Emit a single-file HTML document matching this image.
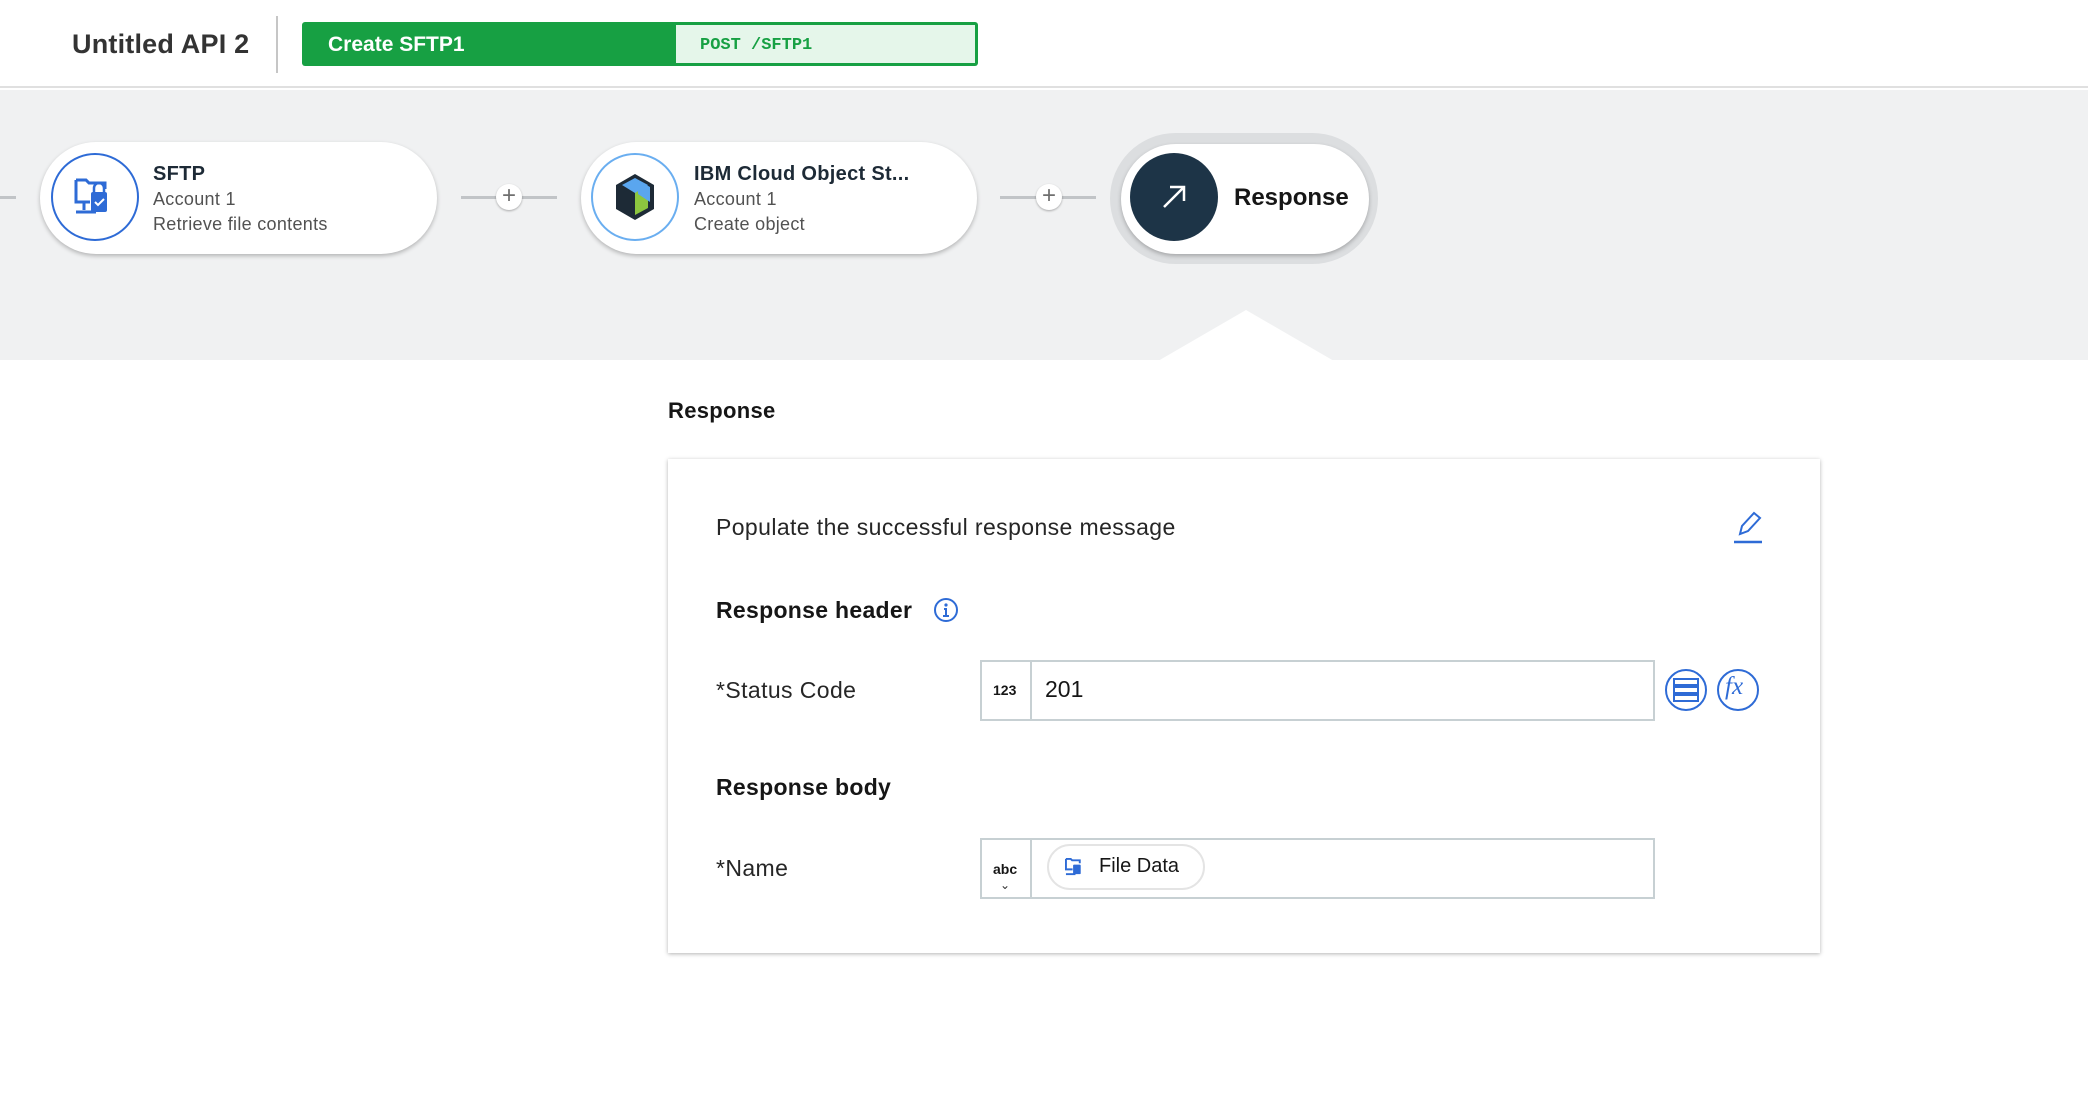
<!DOCTYPE html>
<html><head><meta charset="utf-8"><style>
*{box-sizing:border-box;margin:0;padding:0}
body{width:2088px;height:1100px;background:#fff;font-family:"Liberation Sans",sans-serif;color:#161616;position:relative;overflow:hidden}
.a{position:absolute}
.card{position:absolute;background:#fff;border-radius:56px;box-shadow:0 2px 4px rgba(0,0,0,.25)}
.circ{position:absolute;border-radius:50%}
.t1{font-weight:bold;font-size:20px;color:#1d2a36;letter-spacing:.3px}
.t2{font-size:18px;color:#525252;letter-spacing:.3px}
.line{position:absolute;height:3px;background:#c1c4c7}
.plus{position:absolute;width:26px;height:26px;border-radius:50%;background:#fff;box-shadow:0 1px 2px rgba(0,0,0,.3);font-size:24px;line-height:24px;text-align:center;color:#6f6f6f}
.lbl{position:absolute;font-size:23px;color:#262626;letter-spacing:.4px}
.h{position:absolute;font-size:23px;font-weight:bold;color:#161616;letter-spacing:.3px}
.inp{position:absolute;border:2px solid #c7d0d3;background:#fff}
</style></head><body>
<div class="a" style="left:0;top:0;width:2088px;height:88px;border-bottom:2px solid #e0e0e0"></div>
<div class="a" style="left:72px;top:29px;font-size:27px;color:#333;font-weight:bold;letter-spacing:.2px">Untitled API 2</div>
<div class="a" style="left:276px;top:16px;width:2px;height:57px;background:#c6c6c6"></div>
<div class="a" style="left:302px;top:22px;width:676px;height:44px;background:#17a043;border-radius:3px"></div>
<div class="a" style="left:676px;top:25px;width:299px;height:38px;background:#e5f6ea"></div>
<div class="a" style="left:328px;top:33px;font-size:21px;font-weight:bold;color:#fff">Create SFTP1</div>
<div class="a" style="left:700px;top:36px;font-size:17px;font-family:'Liberation Mono',monospace;font-weight:bold;color:#17a043">POST /SFTP1</div>

<div class="a" style="left:0;top:90px;width:2088px;height:270px;background:#f0f1f2"></div>
<svg class="a" style="left:1158px;top:310px" width="176" height="51"><polygon points="0,51 88,0 176,51" fill="#fff"/></svg>

<div class="line" style="left:0;top:196px;width:16px"></div>
<div class="card" style="left:40px;top:142px;width:397px;height:112px"></div>
<div class="circ" style="left:51px;top:153px;width:88px;height:88px;border:2px solid #2e6bd6"></div>
<svg class="a" style="left:74px;top:176px" width="42" height="42" viewBox="0 0 42 42"><path d="M2 4h10l3 3h16v6M2 4v22h14" fill="none" stroke="#2e6bd6" stroke-width="3"/><rect x="17" y="16" width="16" height="20" rx="2" fill="#2e6bd6"/><path d="M20 16v-4a5 5 0 0 1 10 0v4" fill="none" stroke="#2e6bd6" stroke-width="2.5"/><path d="M21 26l3 3 6-6" fill="none" stroke="#fff" stroke-width="2"/><path d="M10 26v8M2 36h20" stroke="#2e6bd6" stroke-width="3"/></svg>
<div class="a t1" style="left:153px;top:163px">SFTP</div>
<div class="a t2" style="left:153px;top:189px">Account 1</div>
<div class="a t2" style="left:153px;top:214px">Retrieve file contents</div>

<div class="line" style="left:461px;top:196px;width:96px"></div>
<div class="plus" style="left:496px;top:184px">+</div>

<div class="card" style="left:581px;top:142px;width:396px;height:112px"></div>
<div class="circ" style="left:591px;top:153px;width:88px;height:88px;border:2px solid #6aaef0"></div>
<svg class="a" style="left:610px;top:172px" width="50" height="50" viewBox="0 0 50 50"><polygon points="25,2 44,13 44,37 25,48 6,37 6,13" fill="#1d2a36"/><polygon points="25,14 38,21 38,36 25,43" fill="#8cc63f"/><polygon points="12,21 25,14 25,43 12,36" fill="#1d2a36"/><polygon points="25,6 38,13 25,21 12,13" fill="#5aa6ef"/><polygon points="28,8 40,15 40,30 28,22" fill="#5aa6ef"/></svg>
<div class="a t1" style="left:694px;top:163px">IBM Cloud Object St...</div>
<div class="a t2" style="left:694px;top:189px">Account 1</div>
<div class="a t2" style="left:694px;top:214px">Create object</div>

<div class="line" style="left:1000px;top:196px;width:96px"></div>
<div class="plus" style="left:1036px;top:184px">+</div>

<div class="a" style="left:1110px;top:133px;width:268px;height:131px;border-radius:66px;background:#dcdee0"></div>
<div class="card" style="left:1121px;top:144px;width:248px;height:110px"></div>
<div class="circ" style="left:1130px;top:153px;width:88px;height:88px;background:#1d3447"></div>
<svg class="a" style="left:1160px;top:183px" width="28" height="28"><path d="M4 24L24 4M10 4h14v14" fill="none" stroke="#fff" stroke-width="2.5"/></svg>
<div class="a" style="left:1234px;top:184px;font-size:24px;font-weight:bold;color:#161616">Response</div>

<div class="a" style="left:668px;top:398px;font-size:22px;font-weight:bold;letter-spacing:.3px">Response</div>
<div class="a" style="left:668px;top:459px;width:1152px;height:494px;background:#fff;box-shadow:0 1px 4px rgba(0,0,0,.3)"></div>
<div class="lbl" style="left:716px;top:514px">Populate the successful response message</div>
<svg class="a" style="left:1732px;top:510px" width="32" height="34"><path d="M8 24l2-8L22 3l6 5L16 21z" fill="none" stroke="#2e6bd6" stroke-width="2"/><path d="M2 32h28" stroke="#2e6bd6" stroke-width="2.5"/></svg>

<div class="h" style="left:716px;top:597px">Response header</div>
<svg class="a" style="left:933px;top:597px" width="26" height="26"><circle cx="13" cy="13" r="11" fill="none" stroke="#2e6bd6" stroke-width="2"/><circle cx="13" cy="8" r="1.6" fill="#2e6bd6"/><path d="M11 12h2v7M10 19h6" fill="none" stroke="#2e6bd6" stroke-width="2"/></svg>

<div class="lbl" style="left:716px;top:677px">*Status Code</div>
<div class="inp" style="left:980px;top:660px;width:675px;height:61px"></div>
<div class="a" style="left:1030px;top:662px;width:2px;height:57px;background:#c7d0d3"></div>
<div class="a" style="left:993px;top:682px;font-size:14px;font-weight:bold">123</div>
<div class="a" style="left:1045px;top:676px;font-size:23px">201</div>
<div class="circ" style="left:1665px;top:669px;width:42px;height:42px;border:2px solid #2e6bd6"></div>
<svg class="a" style="left:1673px;top:678px" width="26" height="24"><rect x="1" y="1" width="24" height="6" fill="none" stroke="#2e6bd6" stroke-width="2"/><rect x="1" y="9" width="24" height="6" fill="none" stroke="#2e6bd6" stroke-width="2"/><rect x="1" y="17" width="24" height="6" fill="none" stroke="#2e6bd6" stroke-width="2"/></svg>
<div class="circ" style="left:1717px;top:669px;width:42px;height:42px;border:2px solid #2e6bd6"></div>
<div class="a" style="left:1725px;top:673px;font-size:25px;font-style:italic;font-family:'Liberation Serif',serif;color:#2e6bd6">fx</div>

<div class="h" style="left:716px;top:774px">Response body</div>
<div class="lbl" style="left:716px;top:855px">*Name</div>
<div class="inp" style="left:980px;top:838px;width:675px;height:61px"></div>
<div class="a" style="left:1030px;top:840px;width:2px;height:57px;background:#c7d0d3"></div>
<div class="a" style="left:993px;top:861px;font-size:14px;font-weight:bold">abc</div>
<div class="a" style="left:1000px;top:878px;font-size:12px;color:#333">⌄</div>
<div class="a" style="left:1047px;top:844px;width:158px;height:46px;border-radius:23px;border:2px solid #e4e4e4;background:#fff"></div>
<svg class="a" style="left:1065px;top:857px" width="20" height="20" viewBox="0 0 42 42"><path d="M2 4h10l3 3h16v6M2 4v22h14" fill="none" stroke="#2e6bd6" stroke-width="4"/><rect x="17" y="16" width="16" height="20" rx="2" fill="#2e6bd6"/><path d="M2 36h20" stroke="#2e6bd6" stroke-width="4"/></svg>
<div class="a" style="left:1099px;top:855px;font-size:20px">File Data</div>
</body></html>
